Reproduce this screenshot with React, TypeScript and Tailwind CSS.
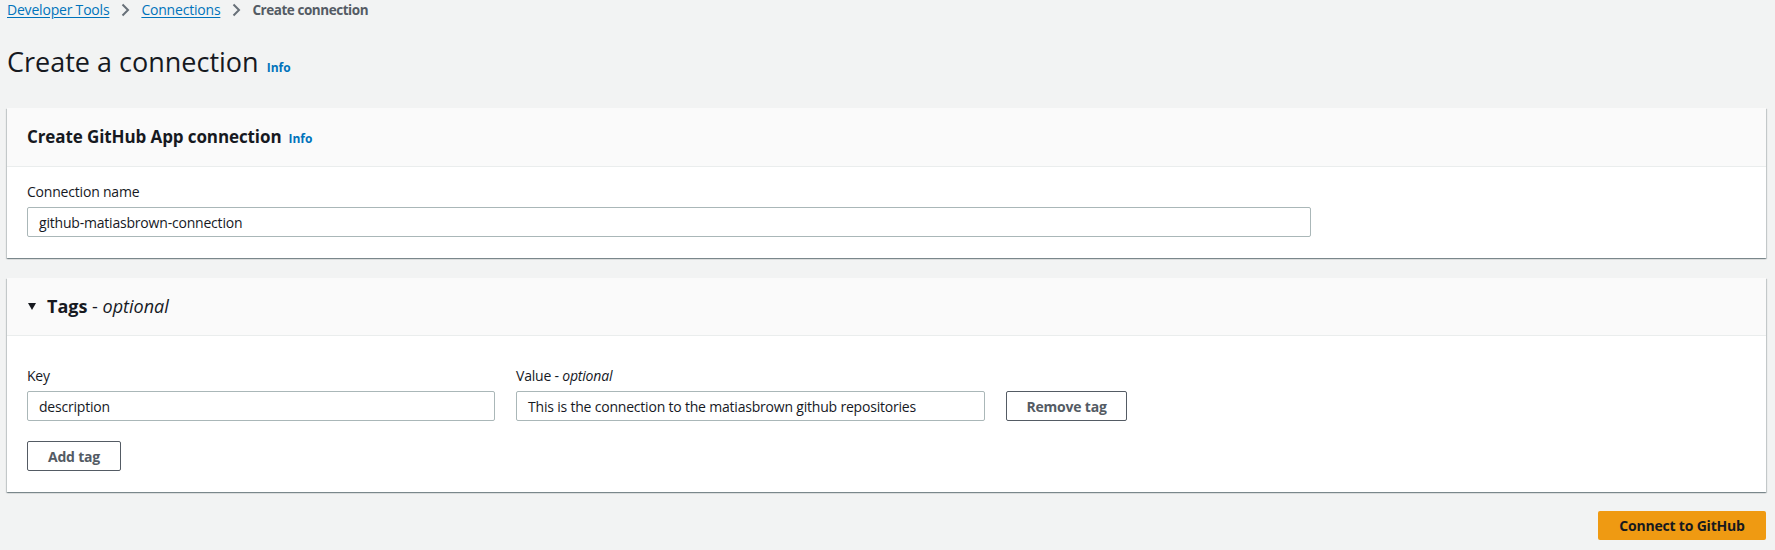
import React from "react";

const font = { fontFamily: '"Open Sans", "Noto Sans", sans-serif' };

function Input({ value, className }: { value: string; className: string }) {
  return (
    <div
      className={`h-[30px] border border-[#aab7b8] rounded-[2px] bg-white flex items-center px-[11px] text-[14px] tracking-[-0.2px] text-[#16191f] ${className}`}
    >
      {value}
    </div>
  );
}

function Button({ label, className }: { label: string; className: string }) {
  return (
    <button
      className={`h-[30px] border border-[#545b64] rounded-[2px] bg-white text-[14px] font-bold tracking-[-0.2px] text-[#545b64] flex items-center justify-center ${className}`}
    >
      {label}
    </button>
  );
}

function Chevron() {
  return (
    <svg width="16" height="16" viewBox="0 0 16 16" className="mx-[8px] text-[#687078]">
      <path d="M5.5 2.5 11 8l-5.5 5.5" fill="none" stroke="currentColor" strokeWidth="2" />
    </svg>
  );
}

export default function App() {
  return (
    <div className="min-h-[550px] bg-[#f2f3f3] pl-[7px] pr-[9px]" style={font}>
      {/* breadcrumbs */}
      <nav className="h-[20px] flex items-center text-[14px] leading-[20px] tracking-[-0.2px]">
        <a className="text-[#0073bb] underline underline-offset-2">Developer Tools</a>
        <Chevron />
        <a className="text-[#0073bb] underline underline-offset-2">Connections</a>
        <Chevron />
        <span className="text-[#545b64] text-[13.5px] font-bold tracking-[-0.45px]">Create connection</span>
      </nav>

      {/* title */}
      <div className="mt-[24px] flex items-baseline gap-[8px]">
        <h1 className="text-[27px] leading-[36px] text-[#16191f]">Create a connection</h1>
        <a className="text-[12px] font-bold text-[#0073bb]">Info</a>
      </div>

      {/* panel 1 */}
      <section className="mt-[28px] bg-white shadow-[0_1px_1px_0_rgba(0,28,36,0.3),1px_1px_1px_0_rgba(0,28,36,0.15),-1px_1px_1px_0_rgba(0,28,36,0.15)]">
        <header className="h-[59px] bg-[#fafafa] border-b border-[#eaeded] flex items-center px-[20px] gap-[7px]">
          <h2 className="text-[17px] font-bold tracking-[-0.1px] text-[#16191f]">Create GitHub App connection</h2>
          <a className="text-[12px] font-bold text-[#0073bb] mt-[3px]">Info</a>
        </header>
        <div className="px-[20px] pt-[14px] pb-[21px]">
          <div className="text-[14px] leading-[22px] tracking-[-0.2px] text-[#16191f] mb-[4px]">Connection name</div>
          <Input value="github-matiasbrown-connection" className="w-[1284px]" />
        </div>
      </section>

      {/* panel 2 */}
      <section className="mt-[20px] bg-white shadow-[0_1px_1px_0_rgba(0,28,36,0.3),1px_1px_1px_0_rgba(0,28,36,0.15),-1px_1px_1px_0_rgba(0,28,36,0.15)]">
        <header className="h-[58px] bg-[#fafafa] border-b border-[#eaeded] flex items-center px-[20px] gap-[11px]">
          <svg width="8" height="7" viewBox="0 0 8 7" className="ml-[1px]">
            <path d="M0 0h8L4 7z" fill="#16191f" />
          </svg>
          <h2 className="text-[18px] text-[#16191f]">
            <span className="font-bold">Tags</span> - <i>optional</i>
          </h2>
        </header>
        <div className="px-[20px] pt-[29px] pb-[21px]">
          <div className="flex gap-[21px] items-end">
            <div className="flex flex-col gap-[4px]">
              <div className="text-[14px] leading-[22px] tracking-[-0.2px] text-[#16191f]">Key</div>
              <Input value="description" className="w-[468px]" />
            </div>
            <div className="flex flex-col gap-[4px]">
              <div className="text-[14px] leading-[22px] tracking-[-0.2px] text-[#16191f]">
                Value - <i>optional</i>
              </div>
              <Input
                value="This is the connection to the matiasbrown github repositories"
                className="w-[469px]"
              />
            </div>
            <Button label="Remove tag" className="w-[121px]" />
          </div>
          <Button label="Add tag" className="w-[94px] mt-[20px]" />
        </div>
      </section>

      {/* footer */}
      <div className="mt-[19px] flex justify-end">
        <button className="h-[29px] w-[168px] bg-[#ef9a12] rounded-[2px] text-[14px] font-bold tracking-[-0.2px] text-[#16191f]">
          Connect to GitHub
        </button>
      </div>
    </div>
  );
}
